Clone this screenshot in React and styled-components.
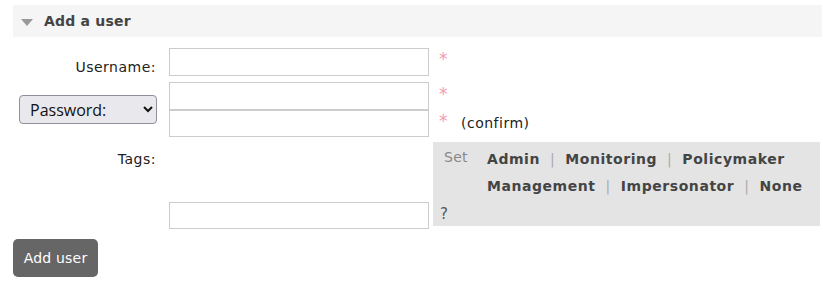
import React from 'react';
import styled, { createGlobalStyle } from 'styled-components';

const GlobalStyle = createGlobalStyle`
    body {
        margin: 0;
        background: #fff;
        font-family: "DejaVu Sans", Verdana, sans-serif;
        font-size: 14px;
        color: #222;
    }
`

const Page = styled.div`
    padding: 5px 1px 0 13px;
`

const Header = styled.div`
    height: 32px;
    background: #f5f5f5;
    display: flex;
    align-items: center;
    padding-left: 8px;
    font-weight: bold;
    font-size: 14px;
    color: #444;
    letter-spacing: 0.2px;
`

const Triangle = styled.span`
    width: 0;
    height: 0;
    border-left: 6px solid transparent;
    border-right: 6px solid transparent;
    border-top: 7px solid #999;
    margin: 2px 11px 0 0;
`

const Form = styled.div`
    display: grid;
    grid-template-columns: 156px 264px 387px;
    margin-top: 11px;
`

const Label = styled.div`
    padding-right: 13px;
    text-align: right;
    letter-spacing: 0.5px;
    padding-top: ${p => p.top || 0}px;
    display: flex;
    justify-content: flex-end;
    align-items: ${p => (p.center ? 'center' : 'flex-start')};
`

const Field = styled.div`
    display: flex;
    flex-direction: column;
    padding-top: ${p => p.top || 0}px;
    padding-right: 4px;
`

const Input = styled.input`
    box-sizing: border-box;
    width: 260px;
    height: ${p => p.h || 28}px;
    border: 1px solid #ccc;
    margin: 0;
    padding: 2px 4px;
    font: inherit;
    background: #fff;
`

const Extra = styled.div`
    display: flex;
    flex-direction: column;
`

const Note = styled.div`
    height: ${p => p.h || 28}px;
    padding-left: 6px;
    display: flex;
    align-items: flex-start;
    letter-spacing: 0.5px;
`

const Star = styled.span`
    color: #f49bb4;
    font-size: 17px;
    line-height: ${p => p.lh || 20}px;
    width: 22px;
`

const Confirm = styled.span`
    line-height: 24px;
    margin-top: 1px;
`

const Select = styled.select`
    width: 138px;
    height: 29px;
    margin-right: -1px;
    font-family: "Open Sans", "Noto Sans", sans-serif;
    font-size: 16px;
    color: #111;
    background: #e9e9ed;
    border: 1px solid #8f8f9d;
    border-radius: 4px;
    padding: 0 6px;
`

const Row = styled.div`
    display: contents;
`

const Gap = styled.div`
    grid-column: 1 / -1;
    height: ${p => p.h}px;
`

const TagPanel = styled.div`
    background: #e4e4e4;
    height: 84px;
    box-sizing: border-box;
    padding: 4px 0 0 7px;
    display: flex;
    flex-direction: column;
`

const TagTop = styled.div`
    display: flex;
`

const SetWord = styled.span`
    color: #888;
    line-height: 22px;
    padding-left: 4px;
    width: 43px;
    letter-spacing: 0.3px;
`

const TagLines = styled.div`
    display: flex;
    flex-direction: column;
`

const TagLine = styled.div`
    line-height: 27px;
    color: #444;
    letter-spacing: 0.55px;
`

const TagLink = styled.b`
    color: #444;
`

const Sep = styled.span`
    color: #aaa;
    margin: 0 10px;
`

const Help = styled.span`
    color: #555;
    font-size: 15px;
    line-height: 20px;
    margin-top: 4px;
`

const Button = styled.button`
    margin-top: 10px;
    width: 85px;
    height: 38px;
    background: #666;
    color: #fff;
    border: none;
    border-radius: 5px;
    font-family: "DejaVu Sans", Verdana, sans-serif;
    font-size: 14px;
    letter-spacing: 0.2px;
    padding: 0;
`

const tags = [
    ['Admin', 'Monitoring', 'Policymaker'],
    ['Management', 'Impersonator', 'None'],
]

function App() {
    return (
        <Page>
            <GlobalStyle />
            <Header>
                <Triangle />
                Add a user
            </Header>

            <Form>
                <Row>
                    <Label top={11}>Username:</Label>
                    <Field><Input /></Field>
                    <Extra><Note><Star lh={22}>*</Star></Note></Extra>
                </Row>
                <Gap h={6} />
                <Row>
                    <Label center>
                        <Select defaultValue="password">
                            <option value="password">Password:</option>
                            <option value="hash">Password hash:</option>
                        </Select>
                    </Label>
                    <Field>
                        <Input type="password" />
                        <Input type="password" h={27} />
                    </Field>
                    <Extra>
                        <Note><Star lh={24}>*</Star></Note>
                        <Note h={27}><Star lh={22}>*</Star><Confirm>(confirm)</Confirm></Note>
                    </Extra>
                </Row>
                <Gap h={5} />
                <Row>
                    <Label top={9}>Tags:</Label>
                    <Field top={60}><Input h={27} /></Field>
                    <TagPanel>
                        <TagTop>
                            <SetWord>Set</SetWord>
                            <TagLines>
                                {tags.map((line, i) => (
                                    <TagLine key={i}>
                                        {line.map((t, j) => (
                                            <React.Fragment key={t}>
                                                {j > 0 && <Sep>|</Sep>}
                                                <TagLink>{t}</TagLink>
                                            </React.Fragment>
                                        ))}
                                    </TagLine>
                                ))}
                            </TagLines>
                        </TagTop>
                        <Help>?</Help>
                    </TagPanel>
                </Row>
            </Form>

            <Button>Add user</Button>
        </Page>
    );
}

export default App;
